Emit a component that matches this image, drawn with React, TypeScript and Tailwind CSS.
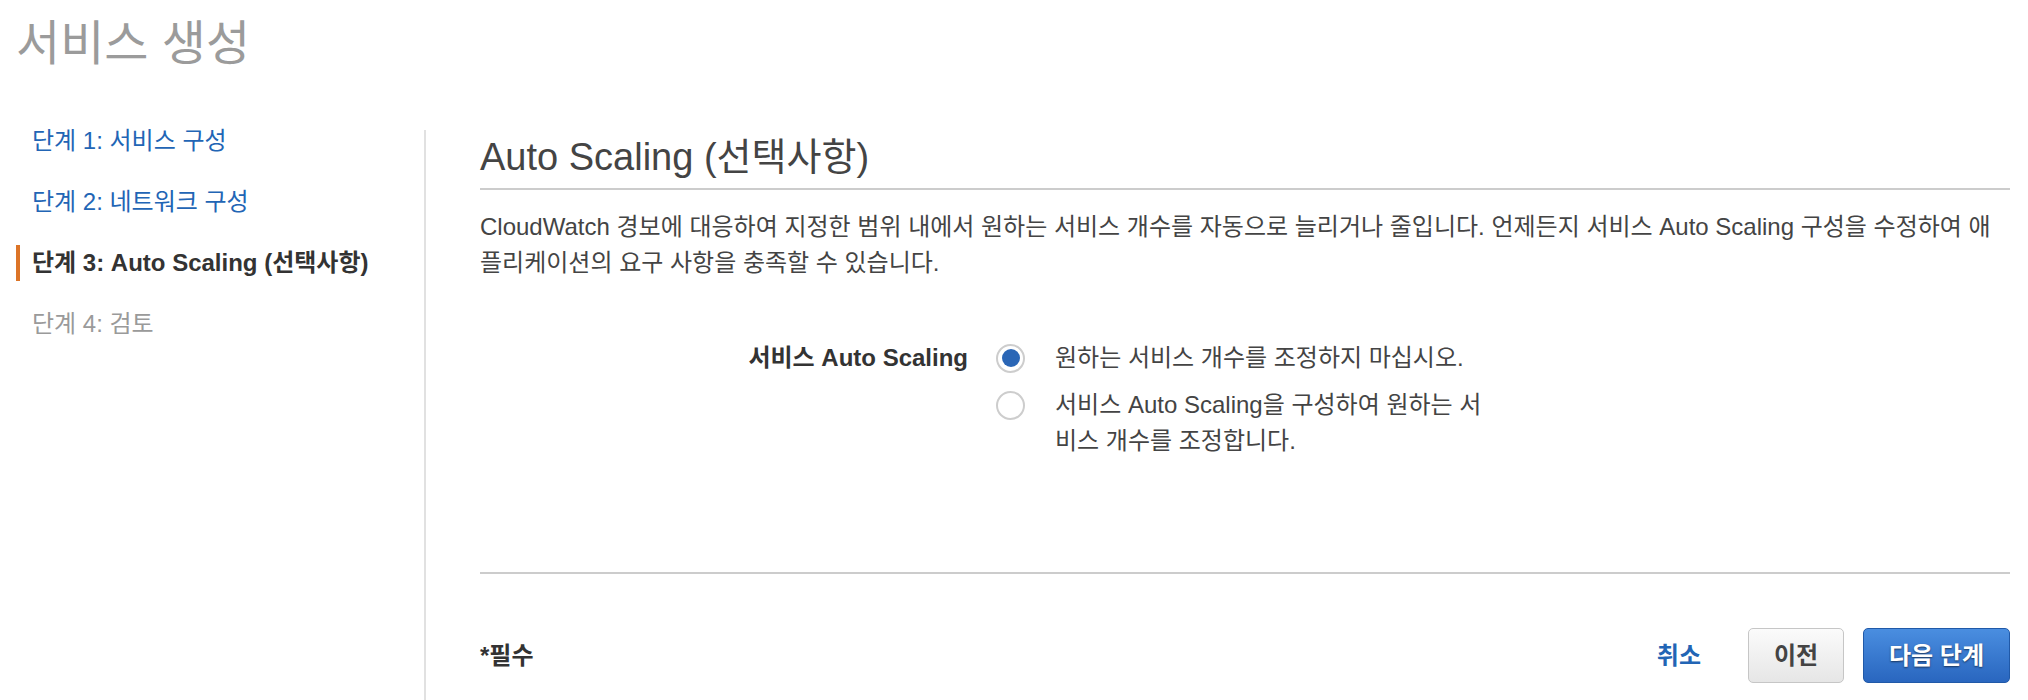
import React from 'react';

type StepState = 'done' | 'active' | 'todo';

const steps: { label: string; state: StepState }[] = [
    { label: '단계 1: 서비스 구성', state: 'done' },
    { label: '단계 2: 네트워크 구성', state: 'done' },
    { label: '단계 3: Auto Scaling (선택사항)', state: 'active' },
    { label: '단계 4: 검토', state: 'todo' },
];

const stepClass: Record<StepState, string> = {
    done: 'border-transparent text-[#2265b5]',
    active: 'border-[#dc7427] text-[#333] font-bold',
    todo: 'border-transparent text-[#9a9a9a]',
};

const Radio = ({ checked }: { checked?: boolean }) => (
    <span className="h-[36px] flex items-center shrink-0">
        <span className="w-[29px] h-[29px] rounded-full border-2 border-[#cdcdcd] bg-white flex items-center justify-center">
            {checked && <span className="w-[18px] h-[18px] rounded-full bg-[#2a66b6]" />}
        </span>
    </span>
);

export default function App() {
    return (
        <div className="min-h-[700px] flex flex-col bg-white text-[#444] font-['Liberation_Sans','Noto_Sans_CJK_KR',sans-serif]">
            <h1 className="pl-[16px] pt-[18px] text-[48px] leading-[52px] text-[#9b9b9b]">서비스 생성</h1>

            <div className="flex flex-1 mt-[53px]">
                {/* Wizard steps */}
                <nav className="w-[424px] shrink-0 flex flex-col gap-[25px]">
                    {steps.map(s => (
                        <div key={s.label} className={`ml-[16px] pl-[12px] border-l-4 h-[36px] text-[24px] leading-[36px] ${stepClass[s.state]}`}>
                            {s.label}
                        </div>
                    ))}
                </nav>
                <div className="w-[2px] bg-[#e1e1e1] mt-[7px] shrink-0" />

                {/* Step body */}
                <div className="flex-1 pl-[54px] pr-[18px]">
                    <h2 className="mt-[12px] pb-[9px] border-b-2 border-[#cccccc] text-[38px] leading-[44px] text-[#444]">Auto Scaling (선택사항)</h2>
                    <p className="mt-[19px] text-[24px] leading-[36px]">
                        CloudWatch 경보에 대응하여 지정한 범위 내에서 원하는 서비스 개수를 자동으로 늘리거나 줄입니다. 언제든지 서비스 Auto Scaling 구성을 수정하여 애
                        <br />
                        플리케이션의 요구 사항을 충족할 수 있습니다.
                    </p>

                    <div className="mt-[59px] flex text-[24px] leading-[36px]">
                        <div className="w-[488px] text-right font-bold text-[#333]">서비스 Auto Scaling</div>
                        <div className="ml-[28px] flex flex-col gap-[11px]">
                            <label className="flex items-start">
                                <Radio checked />
                                <span className="ml-[30px] whitespace-nowrap">원하는 서비스 개수를 조정하지 마십시오.</span>
                            </label>
                            <label className="flex items-start">
                                <Radio />
                                <span className="ml-[30px] whitespace-nowrap">
                                    서비스 Auto Scaling을 구성하여 원하는 서
                                    <br />
                                    비스 개수를 조정합니다.
                                </span>
                            </label>
                        </div>
                    </div>

                    <div className="mt-[113px] h-[2px] bg-[#cccccc]" />

                    <div className="mt-[54px] flex items-center justify-between text-[24px]">
                        <span className="font-bold text-[#333]">*필수</span>
                        <div className="flex items-center">
                            <button className="font-bold text-[#2265b5]">취소</button>
                            <button className="ml-[47px] w-[96px] h-[55px] rounded-[5px] border border-[#c6c6c6] bg-gradient-to-b from-[#fbfbfb] to-[#e6e6e6] font-bold text-[#444]">이전</button>
                            <button className="ml-[19px] w-[147px] h-[55px] rounded-[5px] border border-[#2059a8] bg-gradient-to-b from-[#4a8ee0] to-[#2966bf] font-bold text-white [text-shadow:0_1px_2px_rgba(0,0,0,0.55)]">다음 단계</button>
                        </div>
                    </div>
                </div>
            </div>
        </div>
    );
}
